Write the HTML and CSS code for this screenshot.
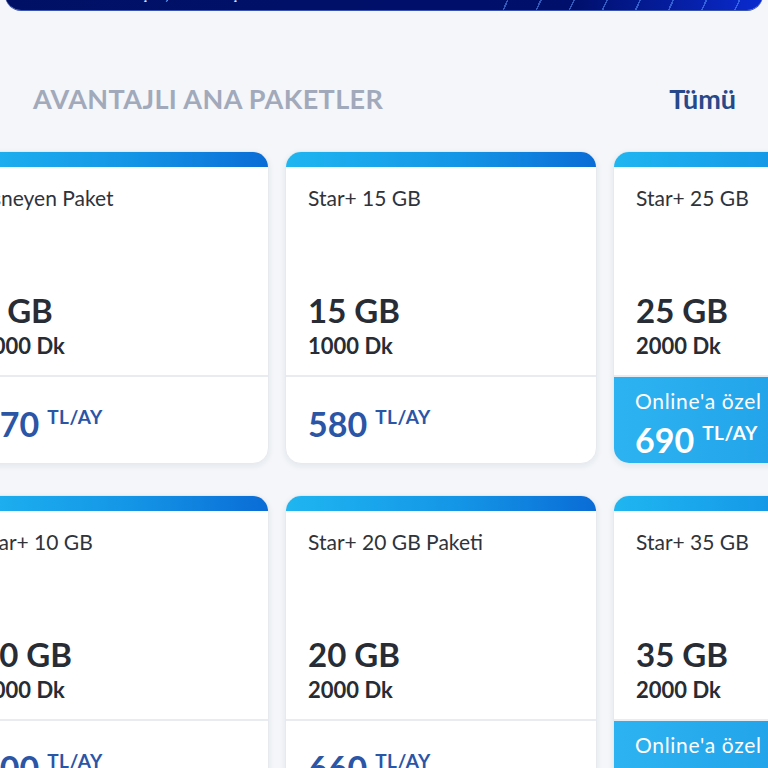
FILE: index.html
```html
<!DOCTYPE html>
<html lang="tr">
<head>
<meta charset="utf-8">
<title>Avantajlı Ana Paketler</title>
<link rel="stylesheet" href="styles.css">
</head>
<body>
<div class="banner"><span class="banner-text">Tüm fırsatları keşfet, hemen başvur</span></div>
<section class="section">
  <div class="section-head">
    <h2 class="section-title">AVANTAJLI ANA PAKETLER</h2>
    <a class="all-link" href="#">Tümü</a>
  </div>
  <div class="grid">
    <div class="card">
      <div class="card-top"></div>
      <div class="card-body">
        <div class="card-name">Esneyen Paket</div>
        <div class="card-values"><div class="gb">8 GB</div><div class="dk">1000 Dk</div></div>
      </div>
      <div class="card-foot"><span class="price">470</span><span class="unit">TL/AY</span></div>
    </div>
    <div class="card">
      <div class="card-top"></div>
      <div class="card-body">
        <div class="card-name">Star+ 15 GB</div>
        <div class="card-values"><div class="gb">15 GB</div><div class="dk">1000 Dk</div></div>
      </div>
      <div class="card-foot"><span class="price">580</span><span class="unit">TL/AY</span></div>
    </div>
    <div class="card">
      <div class="card-top"></div>
      <div class="card-body">
        <div class="card-name">Star+ 25 GB</div>
        <div class="card-values"><div class="gb">25 GB</div><div class="dk">2000 Dk</div></div>
      </div>
      <div class="card-foot online"><div class="online-label">Online'a özel</div><div class="online-price"><span class="price">690</span><span class="unit">TL/AY</span></div></div>
    </div>
    <div class="card">
      <div class="card-top"></div>
      <div class="card-body">
        <div class="card-name">Star+ 10 GB</div>
        <div class="card-values"><div class="gb">10 GB</div><div class="dk">1000 Dk</div></div>
      </div>
      <div class="card-foot"><span class="price">500</span><span class="unit">TL/AY</span></div>
    </div>
    <div class="card">
      <div class="card-top"></div>
      <div class="card-body">
        <div class="card-name">Star+ 20 GB Paketi</div>
        <div class="card-values"><div class="gb">20 GB</div><div class="dk">2000 Dk</div></div>
      </div>
      <div class="card-foot"><span class="price">660</span><span class="unit">TL/AY</span></div>
    </div>
    <div class="card">
      <div class="card-top"></div>
      <div class="card-body">
        <div class="card-name">Star+ 35 GB</div>
        <div class="card-values"><div class="gb">35 GB</div><div class="dk">2000 Dk</div></div>
      </div>
      <div class="card-foot online"><div class="online-label">Online'a özel</div><div class="online-price"><span class="price">790</span><span class="unit">TL/AY</span></div></div>
    </div>
  </div>
</section>
</body>
</html>
```
FILE: styles.css
```css
html, body {
  margin: 0;
  padding: 0;
}
body {
  width: 768px;
  height: 768px;
  overflow: hidden;
  background: #f4f6f9;
  font-family: Lato, "Noto Sans", sans-serif;
  color: #2a2f38;
}
.banner {
  height: 44px;
  margin: -34px 5px 0 5px;
  border-radius: 0 0 16px 16px;
  background:
    repeating-linear-gradient(115deg, transparent 0 18px, rgba(90,150,255,0.55) 18px 19.5px, transparent 19.5px 30px) right / 260px 100% no-repeat,
    linear-gradient(90deg, #001165 0%, #000f6b 75%, #0a2bd0 100%);
  box-shadow: 0 1px 0 #3a55b0;
  display: flex;
  align-items: flex-end;
  padding-left: 40px;
  box-sizing: border-box;
  overflow: hidden;
}
.banner-text {
  color: #fff;
  font-size: 14px;
  line-height: 14px;
  margin-bottom: 8px;
}
.section {
  padding-top: 63px;
}
.section-head {
  display: flex;
  justify-content: space-between;
  align-items: center;
  padding: 0 32px 0 33px;
  height: 50px;
}
.section-title {
  margin: 0;
  font-size: 27px;
  font-weight: 700;
  letter-spacing: 0.4px;
  color: #a1a9bb;
}
.all-link {
  font-size: 27px;
  font-weight: 700;
  color: #27488a;
  text-decoration: none;
}
.grid {
  display: grid;
  grid-template-columns: repeat(3, 312px);
  column-gap: 16px;
  row-gap: 31px;
  margin-left: -43px;
  margin-top: 28px;
}
.card {
  height: 313px;
  border-radius: 16px;
  background: #fff;
  border: 1px solid #e6e9ee;
  box-shadow: 0 2px 6px rgba(30, 45, 80, 0.08);
  display: flex;
  flex-direction: column;
  overflow: hidden;
  box-sizing: border-box;
}
.card-top {
  height: 16px;
  flex: none;
  background: linear-gradient(90deg, #1fb6f1 0%, #1496e6 55%, #0a6cd6 100%);
  margin: -1px -1px 0 -1px;
}
.card-body {
  height: 210px;
  flex: none;
  box-sizing: border-box;
  padding: 18px 22px 14px 22px;
  display: flex;
  flex-direction: column;
  justify-content: space-between;
  border-bottom: 2px solid #e8ebef;
}
.card-name {
  font-size: 21px;
  line-height: 26px;
  color: #2f333a;
}
.gb {
  font-size: 33px;
  font-weight: 700;
  line-height: 36px;
  color: #272c35;
}
.dk {
  font-size: 22px;
  font-weight: 700;
  line-height: 30px;
  margin-top: 3px;
  color: #272c35;
}
.card-foot {
  flex: 1;
  padding: 27px 22px 0 22px;
  display: flex;
  align-items: flex-start;
}
.card-foot .price {
  font-size: 34px;
  font-weight: 700;
  line-height: 40px;
  color: #2b55a5;
}
.card-foot .unit {
  font-size: 19px;
  font-weight: 700;
  color: #2b55a5;
  margin-left: 8px;
  vertical-align: top;
  line-height: 26px;
  letter-spacing: 0.5px;
}
.card-foot.online {
  flex-direction: column;
  padding-top: 11px;
  margin: 0 -1px -1px -1px;
  background: linear-gradient(90deg, #2db3f1 0%, #1a96e4 100%);
}
.card-foot.online .online-label {
  font-size: 21px;
  line-height: 26px;
  color: #fff;
  letter-spacing: 0.7px;
}
.card-foot.online .online-price {
  margin-top: 6px;
}
.card-foot.online .price,
.card-foot.online .unit {
  color: #fff;
}
```
